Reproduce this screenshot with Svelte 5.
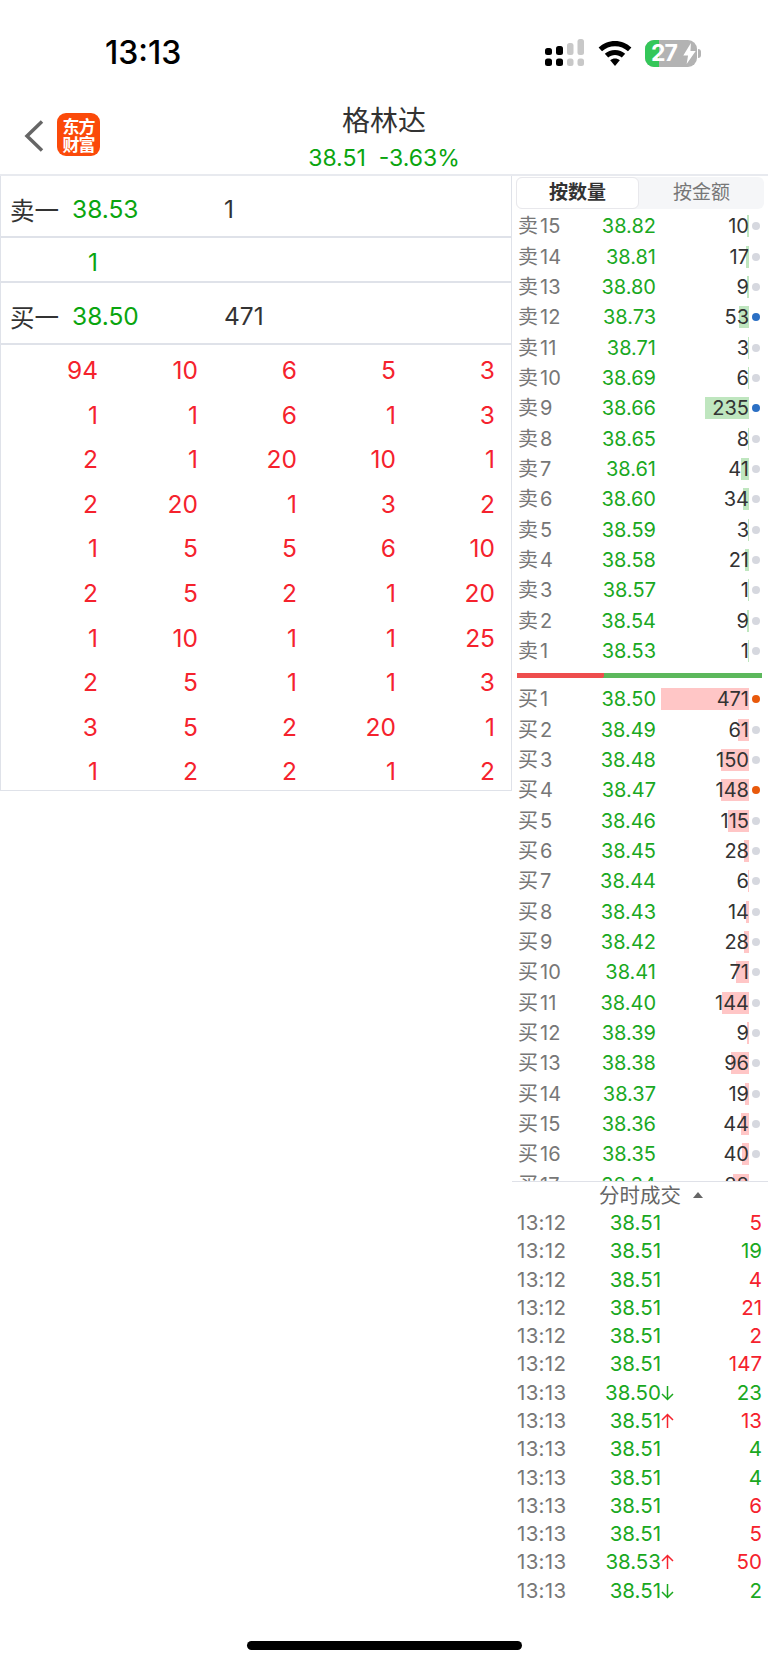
<script>
  const sells = [
    ['15', '38.82', 10, 0], ['14', '38.81', 17, 0], ['13', '38.80', 9, 0], ['12', '38.73', 53, 1],
    ['11', '38.71', 3, 0], ['10', '38.69', 6, 0], ['9', '38.66', 235, 1], ['8', '38.65', 8, 0],
    ['7', '38.61', 41, 0], ['6', '38.60', 34, 0], ['5', '38.59', 3, 0], ['4', '38.58', 21, 0],
    ['3', '38.57', 1, 0], ['2', '38.54', 9, 0], ['1', '38.53', 1, 0]
  ];
  const buys = [
    ['1', '38.50', 471, 2], ['2', '38.49', 61, 0], ['3', '38.48', 150, 0], ['4', '38.47', 148, 2],
    ['5', '38.46', 115, 0], ['6', '38.45', 28, 0], ['7', '38.44', 6, 0], ['8', '38.43', 14, 0],
    ['9', '38.42', 28, 0], ['10', '38.41', 71, 0], ['11', '38.40', 144, 0], ['12', '38.39', 9, 0],
    ['13', '38.38', 96, 0], ['14', '38.37', 19, 0], ['15', '38.36', 44, 0], ['16', '38.35', 40, 0],
    ['17', '38.34', 88, 0]
  ];
  const queue = [
    94, 10, 6, 5, 3, 1, 1, 6, 1, 3, 2, 1, 20, 10, 1, 2, 20, 1, 3, 2, 1, 5, 5, 6, 10,
    2, 5, 2, 1, 20, 1, 10, 1, 1, 25, 2, 5, 1, 1, 3, 3, 5, 2, 20, 1, 1, 2, 2, 1, 2
  ];
  // time, price, arrow, volume, up
  const ticks = [
    ['13:12', '38.51', '', 5, true], ['13:12', '38.51', '', 19, false], ['13:12', '38.51', '', 4, true],
    ['13:12', '38.51', '', 21, true], ['13:12', '38.51', '', 2, true], ['13:12', '38.51', '', 147, true],
    ['13:13', '38.50', 'down', 23, false], ['13:13', '38.51', 'up', 13, true], ['13:13', '38.51', '', 4, false],
    ['13:13', '38.51', '', 4, false], ['13:13', '38.51', '', 6, true], ['13:13', '38.51', '', 5, true],
    ['13:13', '38.53', 'up', 50, true], ['13:13', '38.51', 'down', 2, false]
  ];
  const dots = ['', 'blue', 'orange'];
  const barWidth = (q) => Math.max(1, q * 0.187);
</script>

<div class="page">
  <div class="status">
    <span class="clock">13:13</span>
    <div class="status-icons">
      <svg width="40" height="28" viewBox="0 0 40 28">
        <rect x="0" y="9" width="7" height="7" rx="2.500" fill="#000"/>
        <rect x="0" y="19.500" width="7" height="7.500" rx="2.500" fill="#000"/>
        <rect x="11" y="7" width="7" height="9" rx="2.500" fill="#000"/>
        <rect x="11" y="19.500" width="7" height="7.500" rx="2.500" fill="#000"/>
        <rect x="22" y="4" width="6.500" height="12" rx="2.500" fill="#c8c8c8"/>
        <rect x="22" y="19.500" width="6.500" height="7.500" rx="2.500" fill="#c8c8c8"/>
        <rect x="32.500" y="0" width="6.500" height="16" rx="2.500" fill="#c8c8c8"/>
        <rect x="32.500" y="19.500" width="6.500" height="7.500" rx="2.500" fill="#c8c8c8"/>
      </svg>
      <svg class="wifi" width="34" height="25" viewBox="0 0 34 25">
        <path d="M17 0C10.600 0 4.900 2.500.600 6.600l3.400 3.700C7.500 7 12 5.200 17 5.200s9.500 1.800 13 5.100l3.400-3.700C29.100 2.500 23.400 0 17 0z" fill="#000"/>
        <path d="M17 9c-4 0-7.500 1.400-10.200 3.800l3.400 3.700c1.800-1.500 4.200-2.400 6.800-2.400s5 .9 6.800 2.400l3.400-3.700C24.500 10.400 21 9 17 9z" fill="#000"/>
        <path d="M17 17.500c-1.800 0-3.500.6-4.800 1.700L17 25l4.800-5.800c-1.300-1.100-3-1.700-4.800-1.700z" fill="#000"/>
      </svg>
      <div class="battery">
        <div class="cell">
          <span class="fill"></span>
          <span class="pct">27</span>
          <svg class="bolt" width="13" height="21" viewBox="0 0 13 22"><path d="M8 0 0 13h5l-1.500 9L13 8.500H7.500z" fill="#fff"/></svg>
        </div>
        <span class="nub"></span>
      </div>
    </div>
  </div>

  <div class="nav">
    <svg class="back" width="20" height="32" viewBox="0 0 20 32">
      <path d="M18 1.500 3 16l15 14.500" fill="none" stroke="#666" stroke-width="3.500"/>
    </svg>
    <div class="logo"><span>东方</span><span>财富</span></div>
    <div class="title">
      <div class="name">格林达</div>
      <div class="quote">38.51&nbsp; -3.63%</div>
    </div>
  </div>

  <div class="main">
    <div class="left">
      <div class="level">
        <span class="lv-name">卖一</span><span class="lv-price">38.53</span><span class="lv-qty">1</span>
      </div>
      <div class="queue mid"><span class="green">1</span></div>
      <div class="level">
        <span class="lv-name">买一</span><span class="lv-price">38.50</span><span class="lv-qty">471</span>
      </div>
      <div class="queue">
        {#each queue as q}<span class="red">{q}</span>{/each}
      </div>
    </div>

    <div class="right">
      <div class="tabs">
        <div class="tab on">按数量</div>
        <div class="tab">按金额</div>
      </div>
      <div class="book">
        {#each sells as s}
          <div class="row">
            <span class="lbl">卖<i>{s[0]}</i></span>
            <span class="px">{s[1]}</span>
            <span class="qty"><b class="bar sell" style="width:{barWidth(s[2])}px"></b><em>{s[2]}</em></span>
            <span class="dot {dots[s[3]]}"></span>
          </div>
        {/each}
        <div class="ratio"><span></span></div>
        {#each buys as s}
          <div class="row">
            <span class="lbl">买<i>{s[0]}</i></span>
            <span class="px">{s[1]}</span>
            <span class="qty"><b class="bar buy" style="width:{barWidth(s[2])}px"></b><em>{s[2]}</em></span>
            <span class="dot {dots[s[3]]}"></span>
          </div>
        {/each}
      </div>
      <div class="ticks">
        <div class="ticks-head">分时成交<span class="tri"></span></div>
        {#each ticks as t}
          <div class="tick">
            <span class="t">{t[0]}</span>
            <span class="p">{t[1]}</span>
            <span class="arrow">
              {#if t[2] === 'up'}
                <svg width="13" height="16" viewBox="0 0 13 16"><path d="M6.500 15V1.500M1 7l5.500-5.500L12 7" fill="none" stroke="#f5222d" stroke-width="1.500"/></svg>
              {:else if t[2] === 'down'}
                <svg width="13" height="16" viewBox="0 0 13 16"><path d="M6.500 1v13.500M1 9l5.500 5.500L12 9" fill="none" stroke="#1aa81f" stroke-width="1.500"/></svg>
              {/if}
            </span>
            <span class="v" class:red={t[4]} class:green2={!t[4]}>{t[3]}</span>
          </div>
        {/each}
      </div>
    </div>
  </div>

  <div class="home"></div>
</div>

<style>
  :global(body) {
    margin: 0;
    background: #fff;
  }
  .page {
    width: 768px;
    height: 1665px;
    position: relative;
    overflow: hidden;
    font-family: Inter, "Noto Sans CJK SC", sans-serif;
    color: #333;
  }
  .status {
    height: 38px;
    padding-top: 34px;
    display: flex;
    justify-content: space-between;
    align-items: center;
    padding-left: 105px;
    padding-right: 67px;
  }
  .clock {
    font-size: 32px;
    font-weight: 500;
    color: #000;
    line-height: 38px;
  }
  .status-icons {
    display: flex;
    align-items: center;
    gap: 13px;
  }
  .battery {
    display: flex;
    align-items: center;
    gap: 1px;
  }
  .cell {
    width: 52px;
    height: 27px;
    border-radius: 9px;
    background: #b3b3b3;
    overflow: hidden;
    position: relative;
    display: flex;
    align-items: center;
    padding-left: 6px;
    box-sizing: border-box;
  }
  .fill {
    position: absolute;
    left: 0;
    top: 0;
    bottom: 0;
    width: 14px;
    background: #34c759;
  }
  .pct {
    position: relative;
    color: #fff;
    font-size: 23px;
    font-weight: 700;
    line-height: 27px;
    letter-spacing: -1px;
  }
  .bolt {
    position: relative;
    margin-left: 6px;
  }
  .nub {
    width: 3px;
    height: 9px;
    border-radius: 0 3px 3px 0;
    background: #b3b3b3;
  }

  .nav {
    height: 104px;
    position: relative;
    box-sizing: border-box;
    border-bottom: 2px solid #e8eaef;
    display: flex;
    align-items: flex-start;
  }
  .back {
    margin: 48px 0 0 24px;
  }
  .logo {
    width: 43px;
    height: 43px;
    margin: 41px 0 0 13px;
    border-radius: 9px;
    background: #fb4a0a;
    color: #fff;
    font-family: "Noto Sans CJK SC", sans-serif;
    font-size: 17px;
    font-weight: 700;
    line-height: 18px;
    display: flex;
    flex-direction: column;
    align-items: center;
    justify-content: center;
    letter-spacing: -1px;
  }
  .title {
    position: absolute;
    left: 110px;
    right: 110px;
    top: 29px;
    text-align: center;
  }
  .name {
    font-size: 28px;
    line-height: 40px;
    color: #333;
  }
  .quote {
    margin-top: 2px;
    font-size: 23px;
    line-height: 30px;
    color: #0aa50f;
  }

  .main {
    display: flex;
    align-items: flex-start;
  }
  .left {
    width: 512px;
    box-sizing: border-box;
    border: solid #dfe2e9;
    border-width: 0 1px 1px 1px;
    font-size: 24.500px;
  }
  .level {
    height: 62px;
    box-sizing: border-box;
    border-bottom: 2px solid #dfe2e9;
    display: flex;
    align-items: center;
    padding: 6px 0 0 9px;
  }
  .lv-name {
    width: 62px;
    color: #333;
  }
  .lv-price {
    width: 152px;
    color: #0aa50f;
  }
  .lv-qty {
    color: #333;
  }
  .queue {
    display: grid;
    grid-template-columns: 97px 100px 99px 99px 99px;
    grid-auto-rows: 44.600px;
    box-sizing: border-box;
    height: 445px;
    padding-top: 3px;
    text-align: right;
    line-height: 44.600px;
  }
  .queue.mid {
    height: 45px;
    border-bottom: 2px solid #dfe2e9;
    grid-auto-rows: 40px;
    line-height: 43px;
  }
  .green {
    color: #0aa50f;
  }
  .red {
    color: #f5222d;
  }
  .green2 {
    color: #1aa81f;
  }

  .right {
    flex: 1;
    min-width: 0;
    padding-top: 1px;
    font-size: 20px;
  }
  .tabs {
    height: 32px;
    margin: 0 4px;
    background: #f5f6f8;
    border-radius: 6px;
    display: flex;
  }
  .tab {
    width: 123px;
    box-sizing: border-box;
    text-align: center;
    font-size: 19px;
    line-height: 32px;
    color: #777;
  }
  .tab.on {
    background: #fff;
    border: 1px solid #e8e8ec;
    border-radius: 6px;
    font-weight: 700;
    color: #333;
    line-height: 30px;
  }
  .tab:last-child {
    flex: 1;
  }
  .book {
    height: 970px;
    margin-top: 2px;
    overflow: hidden;
    border-bottom: 1px solid #dfe1e8;
  }
  .row {
    height: 30.350px;
    display: grid;
    grid-template-columns: 66px 72px 93px 14px;
    padding-left: 6px;
    align-items: center;
    line-height: 30px;
  }
  .lbl {
    color: #777;
    white-space: nowrap;
  }
  .lbl i {
    font-style: normal;
    margin-left: 2px;
  }
  .px {
    text-align: right;
    color: #1aa81f;
  }
  .qty {
    position: relative;
    text-align: right;
    color: #333;
    height: 30px;
  }
  .qty em {
    position: relative;
    font-style: normal;
  }
  .bar {
    position: absolute;
    right: 0;
    top: 4px;
    height: 22px;
  }
  .bar.sell {
    background: #bfe6bf;
  }
  .bar.buy {
    background: #ffc6c6;
  }
  .dot {
    justify-self: center;
    width: 8px;
    height: 8px;
    border-radius: 50%;
    background: #d6d8df;
  }
  .dot.blue {
    background: #2b6fc4;
  }
  .dot.orange {
    background: #e8590c;
  }
  .ratio {
    height: 18px;
    display: flex;
    align-items: center;
    margin: 0 6px 0 5px;
  }
  .ratio span {
    flex: 1;
    height: 5px;
    background: linear-gradient(105deg, #ee4d4d 35.500%, #5cb85c 35.500%);
  }

  .ticks {
    font-size: 20.500px;
  }
  .ticks-head {
    height: 25.500px;
    line-height: 24px;
    text-align: center;
    font-size: 20.500px;
    color: #666;
    font-family: "Noto Sans CJK SC", sans-serif;
    position: relative;
    margin-bottom: 1.500px;
  }
  .tri {
    position: absolute;
    left: 181px;
    top: 10px;
    border: solid transparent;
    border-width: 0 5px 6px 5px;
    border-bottom-color: #666;
  }
  .tick {
    height: 28.270px;
    display: grid;
    grid-template-columns: 70px 74px 13px 88px;
    padding-left: 5px;
    align-items: center;
    line-height: 28px;
  }
  .t {
    color: #777;
    letter-spacing: 0.3px;
  }
  .p {
    text-align: right;
    color: #1aa81f;
  }
  .arrow {
    display: flex;
    align-items: center;
  }
  .v {
    text-align: right;
  }
  .home {
    position: absolute;
    left: 247px;
    top: 1641px;
    width: 275px;
    height: 9px;
    border-radius: 5px;
    background: #000;
  }
</style>
